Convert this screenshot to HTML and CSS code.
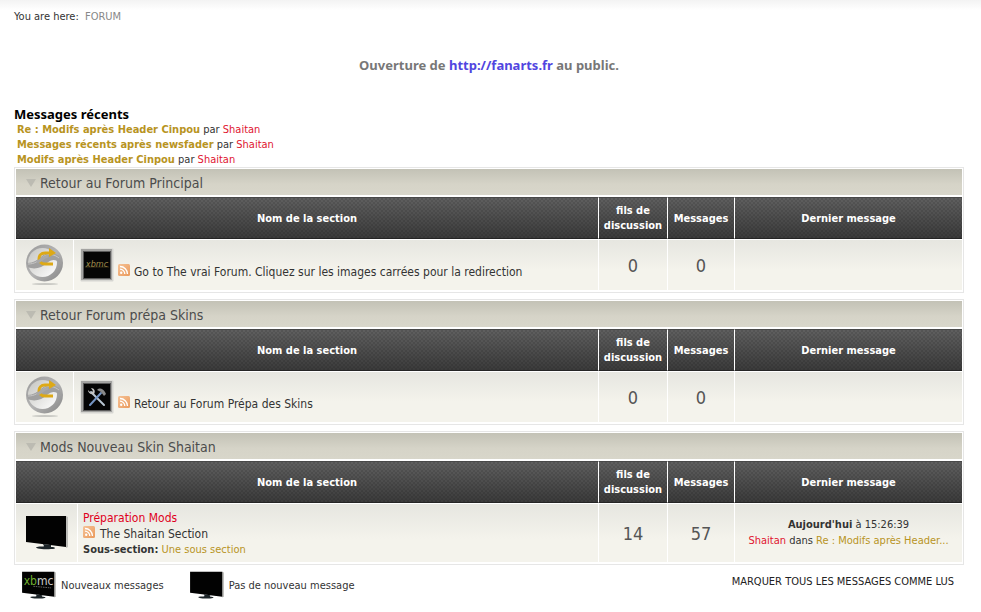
FILE: index.html
```html
<!DOCTYPE html>
<html lang="fr">
<head>
    <meta charset="UTF-8" />
    <meta name="viewport" content="width=device-width, initial-scale=1.0" />
    <title>Forum</title>
    <link rel="stylesheet" href="styles.css">
</head>
<body>
    <svg class="sprites" aria-hidden="true">
        <defs>
            <linearGradient id="ringFill" x1="0" y1="0" x2="1" y2="1">
                <stop offset="0" stop-color="#989898" />
                <stop offset="0.5" stop-color="#b4b4b4" />
                <stop offset="1" stop-color="#858585" />
            </linearGradient>
            <linearGradient id="ballFill" x1="0" y1="0" x2="1" y2="1">
                <stop offset="0" stop-color="#c4c4c0" />
                <stop offset="1" stop-color="#ffffff" />
            </linearGradient>
            <linearGradient id="rssFill" x1="0" y1="0" x2="1" y2="1">
                <stop offset="0" stop-color="#f5c296" />
                <stop offset="1" stop-color="#ea9a5c" />
            </linearGradient>
        </defs>
        <symbol id="redirect" viewBox="0 0 40 42">
            <ellipse cx="20" cy="40" rx="13" ry="1" fill="#c9c9c4" />
            <circle cx="19.500" cy="19" r="18.500" fill="url(#ringFill)" />
            <circle cx="17.500" cy="18.500" r="14.500" fill="url(#ballFill)" />
            <path d="M2 19C9 19 12 16 17 12C22 8 28 8 34 12L36 20C31 15 27 15 22 19C17 24 9 26 3 23Z" fill="#a0a0a0" />
            <path d="M3 20C10 20 13 17 18 13C23 9 29 10 34 14" fill="none" stroke="#c6c6c6" stroke-width="1" />
            <path d="M28 20H20C12 20 12 9 20 9H25" fill="none" stroke="#dda916" stroke-width="3" />
            <path d="M24 4L31 9L24 13Z" fill="#dda916" />
            <path d="M12 18C16 17 18 13 23 12" fill="none" stroke="#a8a8a8" stroke-width="3" />
        </symbol>
        <symbol id="rss" viewBox="0 0 12 12">
            <rect width="12" height="12" rx="1.500" fill="url(#rssFill)" />
            <circle cx="3.200" cy="8.800" r="1.200" fill="#fff" />
            <path d="M2 5.200A4.800 4.800 0 0 1 6.800 10M2 2.500A7.500 7.500 0 0 1 9.500 10" fill="none" stroke="#fff" stroke-width="1.300" />
        </symbol>
        <symbol id="frame" viewBox="0 0 34 34">
            <rect x="0.500" y="0.500" width="33" height="33" rx="1" fill="#d5d5d1" />
            <rect x="1" y="1" width="31" height="31" fill="#a3a3a1" />
            <rect x="3" y="3" width="28" height="28" fill="#5a5a5a" />
            <rect x="4" y="4" width="26" height="26" fill="#050505" />
        </symbol>
        <symbol id="screen" viewBox="0 0 44 36">
            <path d="M41 1L43 2V32L41 33Z" fill="#bdbdb9" />
            <path d="M1 1H41V32L1 27Z" fill="#020202" />
            <path d="M18 29L26 30V32C31 32 32 34 26 34C18 35 8 33 12 32C15 31 19 32 19 31Z" fill="#1c2428" />
        </symbol>
    </svg>

    <main class="page">
        <nav class="crumbs">You are here: <a href="#">FORUM</a></nav>
        <p class="news">Ouverture de <a href="#">http://fanarts.fr</a> au public.</p>

        <section>
            <h2 class="recent-title">Messages récents</h2>
            <ul class="recent">
                <li><a class="topic" href="#">Re : Modifs après Header Cinpou</a> par <a class="user" href="#">Shaitan</a></li>
                <li><a class="topic" href="#">Messages récents après newsfader</a> par <a class="user" href="#">Shaitan</a></li>
                <li><a class="topic" href="#">Modifs après Header Cinpou</a> par <a class="user" href="#">Shaitan</a></li>
            </ul>
        </section>

        <section class="category">
            <h3><a class="collapse" href="#" aria-label="Réduire"></a>Retour au Forum Principal</h3>
            <table>
                <thead>
                    <tr>
                        <th colspan="2">Nom de la section</th>
                        <th class="threads">fils de discussion</th>
                        <th class="messages">Messages</th>
                        <th class="last">Dernier message</th>
                    </tr>
                </thead>
                <tbody>
                    <tr>
                        <td class="status"><svg class="redirect"><use href="#redirect" /></svg></td>
                        <td class="board">
                            <div class="redirect-board">
                                <svg class="thumb" viewBox="0 0 34 34">
                                    <use href="#frame" />
                                    <text x="17" y="19" class="thumb-logo">xbmc</text>
                                    <path d="M5 19H29" stroke="#71602d" stroke-width="0.500" />
                                </svg>
                                <svg class="rss"><use href="#rss" /></svg>
                                <span>Go to The vrai Forum. Cliquez sur les images carrées pour la redirection</span>
                            </div>
                        </td>
                        <td class="count">0</td>
                        <td class="count">0</td>
                        <td></td>
                    </tr>
                </tbody>
            </table>
        </section>

        <section class="category">
            <h3><a class="collapse" href="#" aria-label="Réduire"></a>Retour Forum prépa Skins</h3>
            <table>
                <thead>
                    <tr>
                        <th colspan="2">Nom de la section</th>
                        <th class="threads">fils de discussion</th>
                        <th class="messages">Messages</th>
                        <th class="last">Dernier message</th>
                    </tr>
                </thead>
                <tbody>
                    <tr>
                        <td class="status"><svg class="redirect"><use href="#redirect" /></svg></td>
                        <td class="board">
                            <div class="redirect-board">
                                <svg class="thumb" viewBox="0 0 34 34">
                                    <use href="#frame" />
                                    <path d="M11 12L24 25" stroke="#b9c6d3" stroke-width="2" stroke-linecap="round" />
                                    <path d="M8 10L11 13L13 11L11 8C14 8 16 11 14 14C11 15 8 13 8 10Z" fill="#c5c5c5" />
                                    <path d="M21 13L10 25" stroke="#7595c4" stroke-width="2" stroke-linecap="round" />
                                    <path d="M17 10C20 7 23 9 25 12L26 14L24 16L21 12Z" fill="#8a8a8a" />
                                </svg>
                                <svg class="rss"><use href="#rss" /></svg>
                                <span>Retour au Forum Prépa des Skins</span>
                            </div>
                        </td>
                        <td class="count">0</td>
                        <td class="count">0</td>
                        <td></td>
                    </tr>
                </tbody>
            </table>
        </section>

        <section class="category">
            <h3><a class="collapse" href="#" aria-label="Réduire"></a>Mods Nouveau Skin Shaitan</h3>
            <table>
                <thead>
                    <tr>
                        <th colspan="2">Nom de la section</th>
                        <th class="threads">fils de discussion</th>
                        <th class="messages">Messages</th>
                        <th class="last">Dernier message</th>
                    </tr>
                </thead>
                <tbody>
                    <tr class="tall">
                        <td class="status wide"><svg class="screen"><use href="#screen" /></svg></td>
                        <td class="board">
                            <a class="board-name" href="#">Préparation Mods</a>
                            <div class="board-text"><svg class="rss"><use href="#rss" /></svg><span>The Shaitan Section</span></div>
                            <div class="children"><strong>Sous-section:</strong> <a href="#">Une sous section</a></div>
                        </td>
                        <td class="count">14</td>
                        <td class="count">57</td>
                        <td class="last-post">
                            <strong>Aujourd'hui</strong> à 15:26:39<br>
                            <a class="user" href="#">Shaitan</a> dans <a href="#">Re : Modifs après Header...</a>
                        </td>
                    </tr>
                </tbody>
            </table>
        </section>

        <footer class="legend">
            <span class="legend-item">
                <svg class="screen-small" viewBox="0 0 44 36">
                    <use href="#screen" />
                    <text x="3" y="17" class="screen-logo"><tspan class="green">xb</tspan>mc</text>
                    <path d="M15 19L37 21" stroke="#777" stroke-width="1" stroke-dasharray="2 1" />
                </svg>
                Nouveaux messages
            </span>
            <span class="legend-item">
                <svg class="screen-small" viewBox="0 0 44 36"><use href="#screen" /></svg>
                Pas de nouveau message
            </span>
            <a class="mark-read" href="#">MARQUER TOUS LES MESSAGES COMME LUS</a>
        </footer>
    </main>
</body>
</html>
```

FILE: styles.css
```css
body {
    margin: 0;
    font-family: "DejaVu Sans Condensed", Tahoma, "DejaVu Sans", sans-serif;
    font-size: 11px;
    line-height: 15px;
    color: #333;
    background: #fff linear-gradient(#f3f3f3, #fff) no-repeat;
    background-size: 100% 10px;
}
a {
    color: #b8941f;
    text-decoration: none;
}
svg {
    display: block;
    flex: none;
}
.sprites {
    position: absolute;
    width: 0;
    height: 0;
}
.page {
    padding: 9px 17px 8px 14px;
}
.crumbs {
    line-height: 16px;
}
.crumbs a {
    color: #888;
    margin-left: 3px;
}
.news {
    margin: 32px 0 33px;
    font-family: "Noto Sans", Tahoma, sans-serif;
    font-size: 13px;
    line-height: 16px;
    font-weight: bold;
    text-align: center;
    color: #777;
}
.news a {
    color: #5145e0;
}
.recent-title {
    margin: 0;
    font-family: "Noto Sans", Tahoma, sans-serif;
    font-size: 13px;
    line-height: 16px;
    color: #000;
}
.recent {
    list-style: none;
    margin: 0;
    padding: 0 3px;
}
.topic {
    font-weight: bold;
}
.user {
    color: #e01530;
}

/* board categories */
.category {
    border: 1px solid #e6e6e6;
    padding: 1px 1px 2px;
    margin-bottom: 6px;
}
.category h3 {
    display: flex;
    align-items: center;
    gap: 4px;
    box-sizing: border-box;
    height: 26px;
    margin: 0 0 2px;
    padding: 2px 0 0 10px;
    font-size: 14px;
    font-weight: normal;
    color: #4c4c4c;
    background: linear-gradient(#c3c2b6, #d6d4c8 60%, #d8d6ca);
}
.collapse {
    width: 10px;
    height: 8px;
    background: #bcbbb2;
    clip-path: polygon(0 0, 100% 0, 50% 100%);
}
table {
    width: 100%;
    border-spacing: 0;
}
thead tr {
    background:
        radial-gradient(circle, rgba(0, 0, 0, 0.1) 1px, transparent 1px) 0 0 / 4px 4px,
        radial-gradient(circle, rgba(0, 0, 0, 0.1) 1px, transparent 1px) 2px 2px / 4px 4px,
        linear-gradient(#606060, #3a3a3a);
}
th {
    box-sizing: border-box;
    height: 42px;
    padding: 0 4px;
    color: #fff;
    border-top: 1px solid #484848;
    border-bottom: 1px solid #252525;
}
th + th {
    border-left: 1px solid #fff;
}
.threads {
    width: 69px;
}
.messages {
    width: 67px;
}
.last {
    width: 228px;
}
td {
    box-sizing: border-box;
    height: 51px;
    padding: 0;
    border-top: 1px solid #fff;
    background: linear-gradient(#e6e6e0, #f4f3ec 60%, #f4f3ec) padding-box;
}
td + td {
    border-left: 1px solid #fff;
}
.tall td {
    height: 59px;
}
.status {
    width: 57px;
}
.status.wide {
    width: 61px;
}
.status svg {
    margin: auto;
}
.redirect {
    width: 40px;
    height: 42px;
}
.screen {
    width: 44px;
    height: 36px;
}
.board {
    padding: 0 5px;
}
.redirect-board {
    display: flex;
    align-items: flex-end;
    gap: 4px;
    padding-left: 1px;
    font-size: 12px;
    line-height: 19px;
}
.redirect-board .rss {
    margin-bottom: 6px;
}
.thumb {
    width: 34px;
    height: 34px;
}
.thumb-logo {
    font: italic 9px "DejaVu Sans Condensed", sans-serif;
    text-anchor: middle;
    fill: #a38d4d;
}
.rss {
    width: 12px;
    height: 12px;
}
.board-name {
    display: block;
    font-size: 12px;
    line-height: 16px;
    color: #e0001c;
}
.board-text {
    display: flex;
    gap: 5px;
    font-size: 12px;
    line-height: 16px;
}
.count {
    font-size: 18px;
    text-align: center;
    color: #555;
}
.last-post {
    line-height: 16px;
    text-align: center;
}

.legend {
    display: flex;
    align-items: center;
    gap: 25px;
    padding-left: 7px;
}
.legend-item {
    display: flex;
    align-items: center;
    gap: 4px;
}
.screen-small {
    width: 36px;
    height: 29px;
}
.screen-logo {
    font: 15px "DejaVu Sans Condensed", sans-serif;
    fill: #ccc;
}
.green {
    fill: #6fae2f;
}
.mark-read {
    margin-left: auto;
    padding: 0 10px 8px 0;
    color: #222;
}
```
